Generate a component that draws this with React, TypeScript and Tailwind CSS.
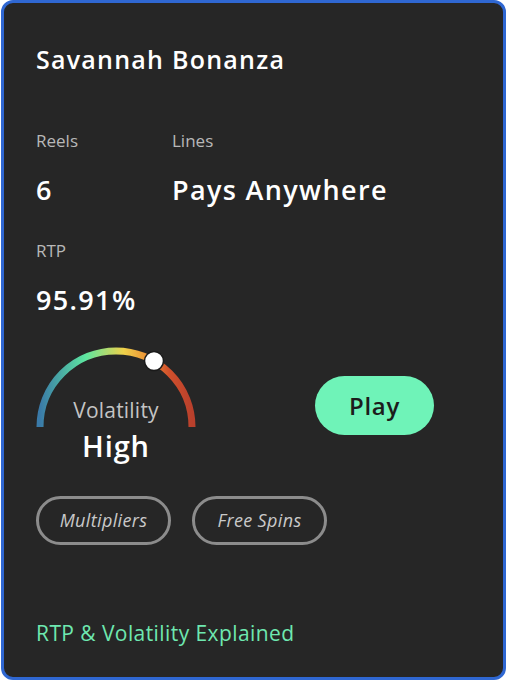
import React from 'react';

const font = { fontFamily: '"Open Sans", "Noto Sans", sans-serif' };

const Stat: React.FC<{ label: string; value: string; className?: string }> = ({ label, value, className }) => (
    <div className={className}>
        <div className="text-[17px] leading-[22px] text-[#b8b8b8]">{label}</div>
        <div className="mt-[22px] text-[27px] leading-[32px] font-semibold tracking-[0.05em] text-white">{value}</div>
    </div>
);

const Gauge: React.FC = () => (
    <div className="relative w-[160px] h-[125px]">
        <svg width="160" height="100" viewBox="0 0 160 100" className="absolute left-0 top-0">
            <defs>
                <linearGradient id="vol" x1="0" y1="0" x2="1" y2="0">
                    <stop offset="0" stopColor="#3a7aa8" />
                    <stop offset="0.3" stopColor="#5de7a0" />
                    <stop offset="0.55" stopColor="#eed14a" />
                    <stop offset="0.72" stopColor="#ec8a32" />
                    <stop offset="0.85" stopColor="#d1502c" />
                    <stop offset="1" stopColor="#b9402c" />
                </linearGradient>
            </defs>
            <path d="M 4 92 A 76 76 0 0 1 156 92" fill="none" stroke="url(#vol)" strokeWidth="7" />
            <circle cx="118" cy="26" r="9.5" fill="#ffffff" stroke="#1a1a1a" strokeWidth="1.5" />
        </svg>
        <div className="absolute left-0 right-0 top-[61px] flex flex-col items-center">
            <span className="text-[21px] leading-[28px] tracking-[0.01em] text-[#c4c4c4]">Volatility</span>
            <span className="mt-[4px] text-[29px] leading-[36px] font-semibold tracking-[0.03em] text-white">High</span>
        </div>
    </div>
);

const Tag: React.FC<{ children: React.ReactNode }> = ({ children }) => (
    <span className="inline-flex items-center justify-center h-[49px] w-[135px] rounded-full border-[3px] border-[#8c8c8c] text-[18px] italic tracking-[0.02em] text-[#c9c9c9]">
        {children}
    </span>
);

export default function App() {
    return (
        <div className="w-[506px] h-[680px] bg-white pl-px" style={font}>
            <div className="h-full rounded-[12px] border-[3px] border-[#2f67d2] bg-[#262626] pl-[32px] pt-[40px] flex flex-col">
                <h1 className="text-[25px] leading-[32px] font-semibold tracking-[0.05em] text-white">Savannah Bonanza</h1>

                <div className="mt-[55px] flex">
                    <Stat label="Reels" value="6" className="w-[136px]" />
                    <Stat label="Lines" value="Pays Anywhere" />
                </div>
                <Stat label="RTP" value="95.91%" className="mt-[34px]" />

                <div className="mt-[19px] flex items-start">
                    <Gauge />
                    <button className="ml-[119px] mt-[41px] h-[59px] w-[119px] rounded-full bg-[#6ff3b8] text-[24px] font-semibold tracking-[0.03em] text-[#1c1c1c]">
                        Play
                    </button>
                </div>

                <div className="mt-[36px] flex gap-[21px]">
                    <Tag>Multipliers</Tag>
                    <Tag>Free Spins</Tag>
                </div>

                <a className="mt-[74px] text-[21px] leading-[28px] tracking-[0.02em] text-[#6ee8b0]">RTP &amp; Volatility Explained</a>
            </div>
        </div>
    );
}
